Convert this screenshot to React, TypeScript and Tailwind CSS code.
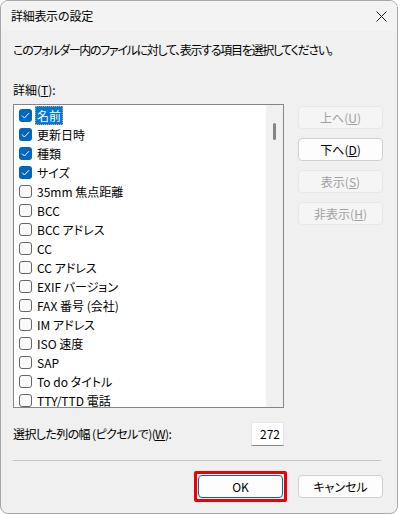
import React from 'react';

const items: { label: string; checked: boolean }[] = [
  { label: '名前', checked: true },
  { label: '更新日時', checked: true },
  { label: '種類', checked: true },
  { label: 'サイズ', checked: true },
  { label: '35mm 焦点距離', checked: false },
  { label: 'BCC', checked: false },
  { label: 'BCC アドレス', checked: false },
  { label: 'CC', checked: false },
  { label: 'CC アドレス', checked: false },
  { label: 'EXIF バージョン', checked: false },
  { label: 'FAX 番号 (会社)', checked: false },
  { label: 'IM アドレス', checked: false },
  { label: 'ISO 速度', checked: false },
  { label: 'SAP', checked: false },
  { label: 'To do タイトル', checked: false },
  { label: 'TTY/TTD 電話', checked: false },
];

const Check = ({ on }: { on: boolean }) =>
  on ? (
    <span className="w-[13px] h-[13px] rounded-[3px] bg-[#0067c0] flex items-center justify-center shrink-0">
      <svg width="9" height="7" viewBox="0 0 9 7" fill="none">
        <path d="M1 3.6 L3.4 6 L8 1.2" stroke="white" strokeWidth="1" />
      </svg>
    </span>
  ) : (
    <span className="w-[13px] h-[13px] rounded-[3px] border border-[#666666] bg-[#fafafa] shrink-0" />
  );

const SideButton = ({ label, k, enabled }: { label: string; k: string; enabled?: boolean }) => (
  <button
    className={`w-[85px] h-[23px] rounded-[4px] text-[12px] flex items-center justify-center border ${
      enabled ? 'bg-[#fdfdfd] border-[#d0d0d0] text-black' : 'bg-[#f5f5f5] border-[#e8e8e8] text-[#a0a0a0]'
    }`}
  >
    {label}(<span className="underline">{k}</span>)
  </button>
);

export default function App() {
  return (
    <div className="w-[398px] h-[514px] rounded-[8px] border border-[#a8a8a8] bg-[#f0f0f0] overflow-hidden flex flex-col text-black font-['Noto_Sans_CJK_JP',sans-serif] [font-feature-settings:'palt'] text-[12px] leading-[16px]">
      {/* title bar */}
      <div className="h-[30px] bg-[#f3f3f3] flex items-center justify-between pl-[10px] pr-[10px] shrink-0">
        <span className="[font-feature-settings:normal] tracking-[-0.3px]">詳細表示の設定</span>
        <svg width="11" height="11" viewBox="0 0 11 11">
          <path d="M0.5 0.5 L10.5 10.5 M10.5 0.5 L0.5 10.5" stroke="#1a1a1a" strokeWidth="1" />
        </svg>
      </div>

      <div className="pl-[12px] pr-[14px] flex flex-col">
        <p className="mt-[11px] tracking-[-1.3px]">このフォルダー内のファイルに対して、表示する項目を選択してください。</p>
        <p className="mt-[24px]">
          詳細(<span className="underline">T</span>):
        </p>

        <div className="mt-[6px] flex gap-[14px]">
          {/* list */}
          <div className="w-[271px] h-[304px] border border-[#858585] bg-white flex overflow-hidden">
            <div className="flex-1 pt-[1px] flex flex-col">
              {items.map((it, i) => (
                <div key={it.label} className="h-[19px] flex items-center pl-[5px] gap-[3px] shrink-0">
                  <Check on={it.checked} />
                  {i === 0 ? (
                    <span className="h-[19px] px-[1px] flex items-center bg-[#0078d7] text-white border border-dotted border-[#e8a848]">
                      {it.label}
                    </span>
                  ) : (
                    <span className="px-[2px]">{it.label}</span>
                  )}
                </div>
              ))}
            </div>
            <div className="w-[17px] bg-[#f0f0f0] relative shrink-0">
              <div className="absolute left-[7px] top-[18px] w-[3px] h-[17px] rounded-full bg-[#858585]" />
            </div>
          </div>

          {/* side buttons */}
          <div className="mt-[2px] flex flex-col gap-[9px]">
            <SideButton label="上へ" k="U" />
            <SideButton label="下へ" k="D" enabled />
            <SideButton label="表示" k="S" />
            <SideButton label="非表示" k="H" />
          </div>
        </div>

        <div className="mt-[14px] w-[271px] flex items-center justify-between">
          <span className="tracking-[-0.6px]">
            選択した列の幅 (ピクセルで)(<span className="underline">W</span>):
          </span>
          <div className="w-[33px] h-[24px] bg-white border border-[#e6e6e6] border-b-[#8a8a8a] flex items-center justify-end pr-[3px]">
            272
          </div>
        </div>

        <div className="mt-[14px] w-[368px] h-[1px] bg-[#c6c6c6]" />

        <div className="mt-[14px] flex justify-end gap-[15px]">
          <button className="relative w-[85px] h-[23px] rounded-[4px] bg-[#fdfdfd] border border-[#0067c0] flex items-center justify-center">
            OK
            <span className="absolute -left-[5px] -top-[5px] -right-[5px] -bottom-[5px] border-[3px] border-[#ee0000] rounded-[2px]" />
          </button>
          <button className="w-[85px] h-[23px] rounded-[4px] bg-[#fdfdfd] border border-[#d0d0d0] flex items-center justify-center">
            キャンセル
          </button>
        </div>
      </div>
    </div>
  );
}
